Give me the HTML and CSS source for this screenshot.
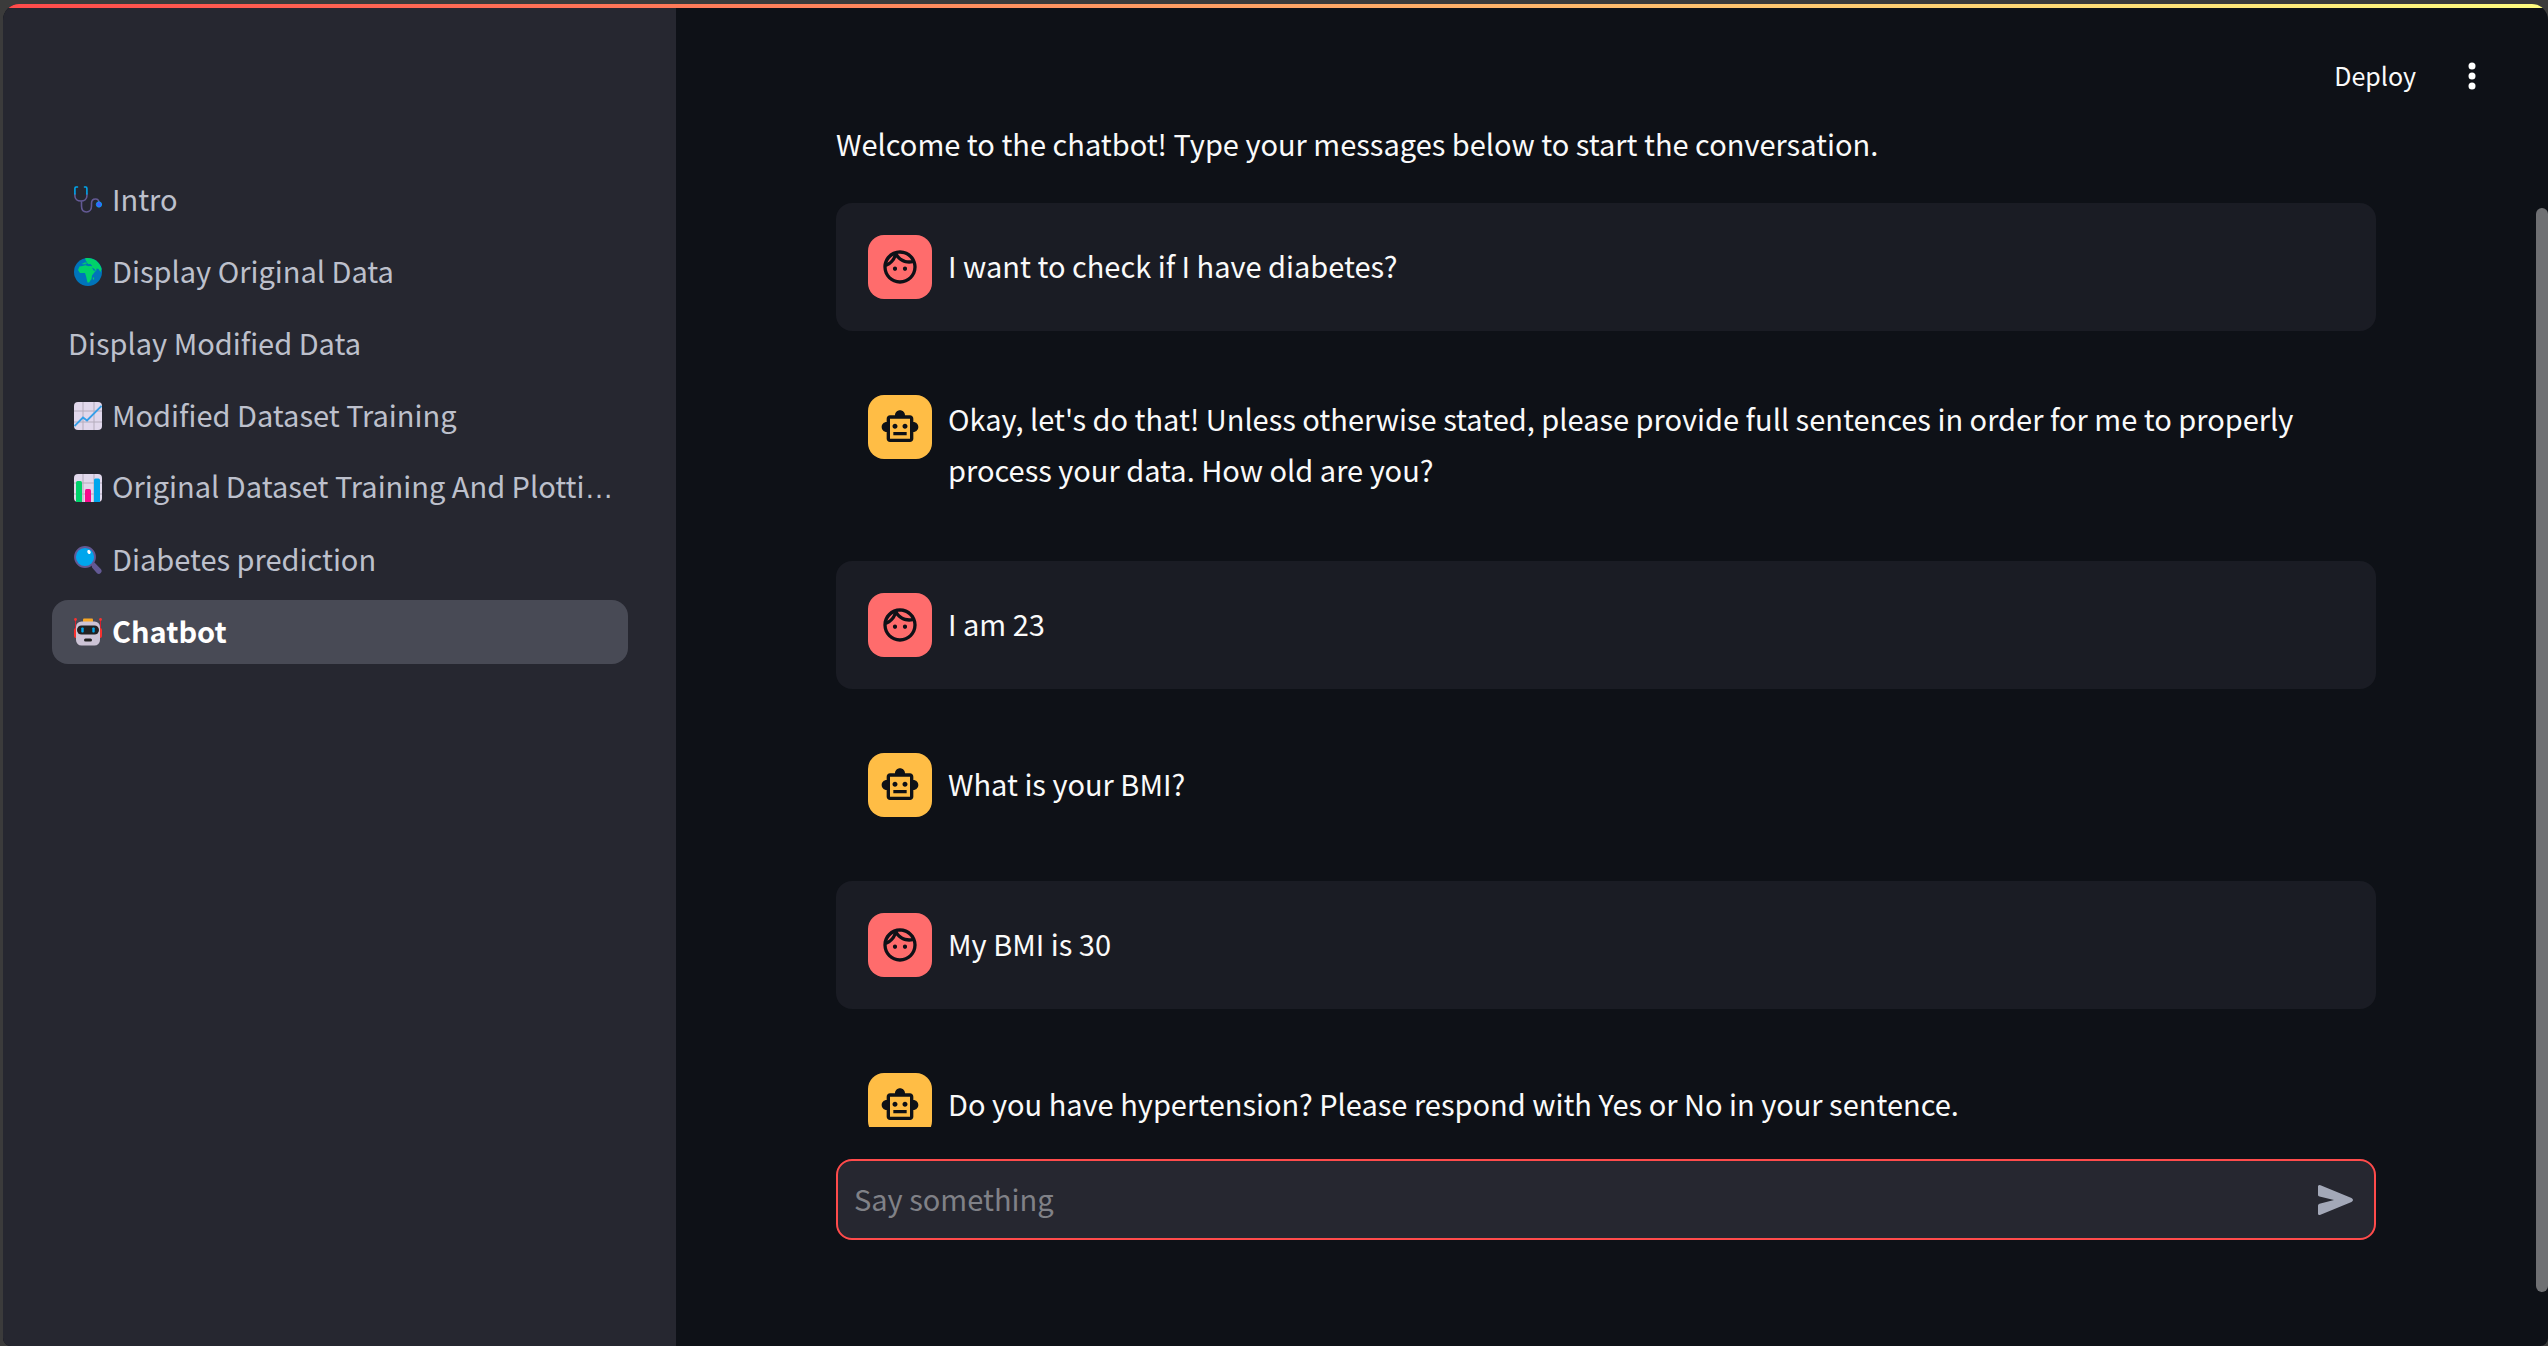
FILE: index.html
```html
<!DOCTYPE html>
<html lang="en">
<head>
<meta charset="utf-8">
<title>Chatbot</title>
<link rel="stylesheet" href="styles.css">
</head>
<body>
<svg class="sprite" aria-hidden="true">
  <symbol id="face" viewBox="0 0 24 24"><path d="M10.25 13c0 .69-.56 1.25-1.25 1.25S7.75 13.69 7.75 13s.56-1.25 1.25-1.25 1.25.56 1.25 1.25zM15 11.75c-.69 0-1.25.56-1.25 1.25s.56 1.25 1.25 1.25 1.25-.56 1.25-1.25-.56-1.25-1.25-1.25zm7 .25c0 5.52-4.48 10-10 10S2 17.52 2 12 6.48 2 12 2s10 4.48 10 10zM10.66 4.12C12.06 6.44 14.6 8 17.5 8c.46 0 .91-.05 1.34-.12C17.44 5.56 14.9 4 12 4c-.46 0-.91.05-1.34.12zM4.42 9.47c1.71-.97 3.03-2.55 3.66-4.44C6.37 6 5.05 7.58 4.42 9.47zM20 12c0-.78-.12-1.53-.33-2.24-.7.15-1.42.24-2.17.24-3.13 0-5.92-1.44-7.76-3.69C8.69 8.87 6.6 10.88 4 11.86c.01.04 0 .09 0 .14 0 4.42 3.58 8 8 8s8-3.58 8-8z"/></symbol>
  <symbol id="bot" viewBox="0 0 24 24"><path d="M20 9V7c0-1.1-.9-2-2-2h-3c0-1.66-1.34-3-3-3S9 3.34 9 5H6c-1.1 0-2 .9-2 2v2c-1.66 0-3 1.34-3 3s1.34 3 3 3v4c0 1.1.9 2 2 2h12c1.1 0 2-.9 2-2v-4c1.66 0 3-1.34 3-3s-1.34-3-3-3zm-2 10H6V7h12v12zm-9-6c-.83 0-1.5-.67-1.5-1.5S8.17 10 9 10s1.5.67 1.5 1.5S9.83 13 9 13zm7.5-1.5c0 .83-.67 1.5-1.5 1.5s-1.5-.67-1.5-1.5.67-1.5 1.5-1.5 1.5.67 1.5 1.5zM8 15h8v2H8v-2z"/></symbol>
</svg>
<div class="app">
  <div class="accent"></div>
  <div class="body">
    <nav class="sidebar" aria-label="Pages">
      <a class="page" href="#intro">
        <svg class="emoji" viewBox="0 0 28 28" fill="none" stroke-width="1.6" stroke-linecap="round"><path d="M.9 8v2c0 3 2.500 5 6 5s6-2 6-5V8M7.500 15v5c0 4 2 6 5 6s5-2.500 5-6v-2.500c0-3 1.500-4.500 4-4.500s3.500 1.500 3.500 4" stroke="#635994"/><path d="M3.500 1H2Q.9 1 .9 2.500V8M10.500 1h1.300q1.100 0 1.100 1.500V8" stroke="#00a6ed"/><circle cx="25" cy="18.500" r="2.700" fill="#3f5fff" stroke="#00a6ed" stroke-width=".8"/></svg>
        <span class="label">Intro</span></a>
      <a class="page" href="#original">
        <svg class="emoji" viewBox="0 0 28 28"><circle cx="14" cy="14" r="14" fill="#0074ba"/><path d="M11 .4C17-1 25 2 27.600 11l-1.200 3-1.800-3-2-.5-.6 3-1.500-2.500-2.500-1.500 1.500 3 2 .5-3.500 4.500-.5 3.500-2.500 3.500h-1.500L12 18l-1-3H6l-2-3 1.500-3.500 3-.5 3-.8 3 1 3-.7-1-1.500-2 .3-1.500-1.500-1 1.500H9L7.500 6l3-1.200 1.500-2z" fill="#00d26a"/><path d="M10.500 3l2 .8-1 1.500M15 7l3 .8" stroke="#0074ba" fill="none"/><path d="M19.500 19.500v2" stroke="#00d26a" stroke-width="1.200"/></svg>
        <span class="label">Display Original Data</span></a>
      <a class="page" href="#modified"><span class="label">Display Modified Data</span></a>
      <a class="page" href="#modified-training">
        <svg class="emoji" viewBox="0 0 28 28"><rect width="28" height="28" rx="4" fill="#e1d8ec"/><path d="M9 0v28M20 0v28M0 9h28M0 20h28" stroke="#b4acbc"/><path d="M.5 24L9 15.500l4 3L27.500 4" fill="none" stroke="#359fe8" stroke-width="1.800"/></svg>
        <span class="label">Modified Dataset Training</span></a>
      <a class="page" href="#original-training">
        <svg class="emoji" viewBox="0 0 28 28"><rect width="28" height="28" rx="4" fill="#e1d8ec"/><path d="M9 0v28M20 0v28M0 9h28M0 20h28" stroke="#b4acbc"/><path d="M2 28V8.500Q2 7 3.500 7h3Q8 7 8 8.500V28z" fill="#00d26a"/><path d="M11 28V16.500Q11 15 12.500 15h3Q17 15 17 16.500V28z" fill="#f70a8d"/><path d="M20 28V6q0-1.500 1.500-1.500h3Q26 4.500 26 6v22z" fill="#00a6ed"/></svg>
        <span class="label">Original Dataset Training And Plotti<span class="more">…</span></span></a>
      <a class="page" href="#prediction">
        <svg class="emoji" viewBox="0 0 28 28"><path d="M17.500 18.500l3-2 6.500 6.800q1.500 2-.3 3.700t-3.700.2l-5-5.700z" fill="#635994"/><circle cx="11" cy="11" r="10" fill="#00a6ed" stroke="#635994" stroke-width="1.800"/><ellipse cx="15" cy="6" rx="1.600" ry="2.100" fill="#fff" transform="rotate(-25 15 6)"/></svg>
        <span class="label">Diabetes prediction</span></a>
      <a class="page active" href="#chatbot" aria-current="page">
        <svg class="emoji" viewBox="0 0 28 28"><path d="M1.500 1.500v18M26.500 1.500v18" stroke="#d3212f"/><circle cx="1.500" cy="1.500" r="1.400" fill="#f8312f"/><circle cx="26.500" cy="1.500" r="1.400" fill="#f8312f"/><rect y="10" width="4" height="10" rx="2" fill="#f8312f"/><rect x="24" y="10" width="4" height="10" rx="2" fill="#f8312f"/><rect x="9" y=".6" width="10" height="4" rx="1" fill="#f9a825"/><rect x="2" y="3.500" width="24" height="24" rx="5.500" fill="#cdc4d6"/><rect x="3" y="7.500" width="22" height="9" rx="4.500" fill="#212121"/><rect x="7.300" y="9.500" width="2.400" height="5" rx=".8" fill="#00a6ed"/><rect x="18.300" y="9.500" width="2.400" height="5" rx=".8" fill="#00a6ed"/><rect x="10" y="20.500" width="8" height="3" rx="1.500" fill="#212121"/></svg>
        <span class="label">Chatbot</span></a>
    </nav>
    <main class="main">
      <div class="view">
        <header class="toolbar">
          <button class="deploy" type="button">Deploy</button>
          <button class="menu" type="button" aria-label="Main menu"><svg width="40" height="40" viewBox="0 0 40 40"><circle cx="20" cy="10" r="3.500"/><circle cx="20" cy="20" r="3.500"/><circle cx="20" cy="30" r="3.500"/></svg></button>
        </header>
        <section class="chat">
          <p class="text">Welcome to the chatbot! Type your messages below to start the conversation.</p>
          <article class="message user"><span class="avatar"><svg class="glyph"><use href="#face"/></svg></span><p class="text">I want to check if I have diabetes?</p></article>
          <article class="message"><span class="avatar"><svg class="glyph"><use href="#bot"/></svg></span><p class="text">Okay, let's do that! Unless otherwise stated, please provide full sentences in order for me to properly process your data. How old are you?</p></article>
          <article class="message user"><span class="avatar"><svg class="glyph"><use href="#face"/></svg></span><p class="text">I am 23</p></article>
          <article class="message"><span class="avatar"><svg class="glyph"><use href="#bot"/></svg></span><p class="text">What is your BMI?</p></article>
          <article class="message user"><span class="avatar"><svg class="glyph"><use href="#face"/></svg></span><p class="text">My BMI is 30</p></article>
          <article class="message"><span class="avatar"><svg class="glyph"><use href="#bot"/></svg></span><p class="text">Do you have hypertension? Please respond with Yes or No in your sentence.</p></article>
        </section>
        <form class="composer">
          <div class="field">
            <input class="entry" type="text" placeholder="Say something" aria-label="Say something">
            <button class="send" type="button" aria-label="Send"><svg width="48" height="48" viewBox="0 0 48 48"><path d="M6 10.500Q6 8.300 8.500 9.200L39.500 22Q41 22.800 41 24t-1.500 2L8.500 38.800Q6 39.700 6 37.500V29.500q0-1.300 1.500-1.800L22 24 7.500 20.600Q6 20.200 6 19z"/></svg></button>
          </div>
        </form>
      </div>
      <div class="scroll"><div class="thumb"></div></div>
    </main>
  </div>
</div>
</body>
</html>
```
FILE: styles.css
```css
* { box-sizing: border-box; }

body {
  margin: 0;
  padding: 4px 0 0 3px;
  height: 100vh;
  background: #3b3b3b;
  color: #fafafa;
  font: 29px/51px "Noto Sans CJK SC", sans-serif;
}

.sprite { position: absolute; width: 0; height: 0; }

button {
  padding: 0;
  border: 0;
  background: none;
  color: inherit;
  font: inherit;
}

.app {
  display: flex;
  flex-direction: column;
  height: 100%;
  overflow: hidden;
  border-radius: 16px 16px 8px 8px;
  background: #0e1117;
}

.accent {
  flex: none;
  height: 4px;
  background: linear-gradient(90deg, #ff4b4b, #fffd80);
}

.body { display: flex; flex: 1; min-height: 0; }

.sidebar {
  display: flex;
  flex: none;
  flex-direction: column;
  gap: 8px;
  width: 673px;
  padding: 160px 48px 0 49px;
  background: #262730;
}

.page {
  display: flex;
  align-items: center;
  gap: 10px;
  height: 64px;
  padding: 0 16px;
  border-radius: 16px;
  color: #bdc0cc;
  text-decoration: none;
}

.active { background: #484a55; color: #fff; font-weight: bold; }

.emoji { flex: none; width: 28px; height: 28px; margin-left: 6px; }

.label { padding-bottom: 3px; white-space: nowrap; }

.more { font-family: "Liberation Sans", sans-serif; }

.main { display: flex; flex: 1; min-width: 0; }

.view { display: flex; flex: 1; flex-direction: column; min-width: 0; }

.toolbar {
  display: flex;
  flex: none;
  align-items: center;
  justify-content: flex-end;
  gap: 36px;
  height: 112px;
  padding: 24px 44px 0 0;
}

.deploy { padding-bottom: 3px; font-size: 25px; line-height: 48px; }
.menu { display: flex; fill: #fff; }

.chat {
  display: flex;
  flex: 1;
  flex-direction: column;
  gap: 32px;
  min-height: 0;
  overflow: hidden;
  padding: 0 160px;
}

/* lifts the type so it sits optically centred beside the avatars */
.text { margin: -2px 0 2px; }

.message {
  display: flex;
  flex: none;
  gap: 16px;
  padding: 32px;
  border-radius: 16px;
}

.message .text { flex: 1; align-self: center; }

.user { background: #1a1c24; }

.avatar {
  display: grid;
  flex: none;
  place-items: center;
  width: 64px;
  height: 64px;
  border-radius: 16px;
  background: #ffbd45;
}

.user .avatar { background: #ff6c6c; }

.glyph { width: 40px; height: 40px; fill: #0e1117; }

.composer { flex: none; padding: 32px 160px 106px; }

.field {
  display: flex;
  align-items: center;
  padding: 13px 14px 13px 16px;
  border: 2px solid #ff4b4b;
  border-radius: 16px;
  background: #262730;
}

.entry {
  flex: 1;
  min-width: 0;
  height: 51px;
  padding: 0 0 3px;
  border: 0;
  outline: 0;
  background: none;
  color: #fafafa;
  font: inherit;
}

.entry::placeholder { color: #808187; opacity: 1; }

.send { display: flex; fill: #a3a8b8; }

.scroll { flex: none; width: 12px; padding: 200px 0 54px; }
.thumb { height: 100%; border-radius: 6px; background: #6f7073; }
```
